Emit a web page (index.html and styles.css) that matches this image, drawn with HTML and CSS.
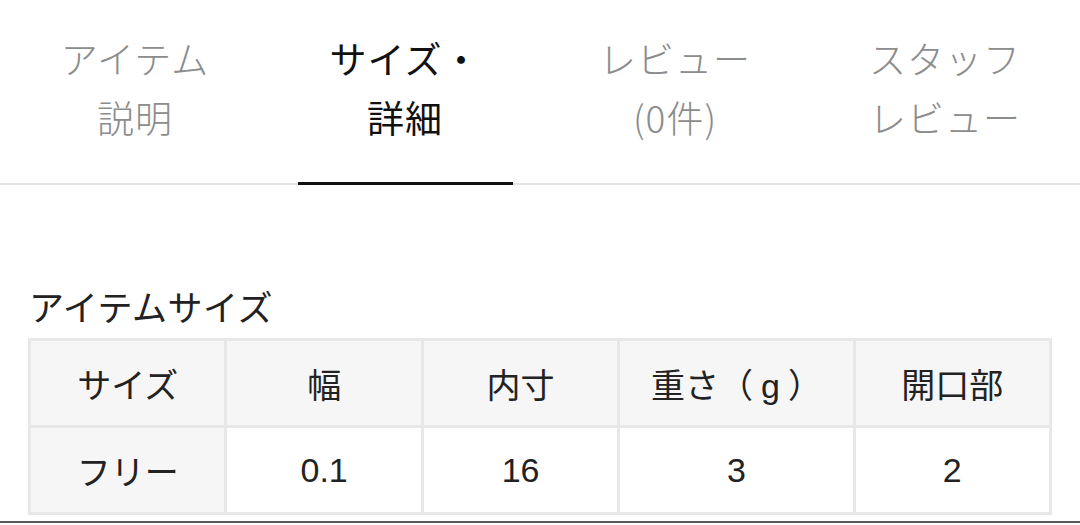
FILE: index.html
```html
<!DOCTYPE html>
<html lang="ja">
<head>
<meta charset="utf-8">
<link rel="stylesheet" href="styles.css">
</head>
<body>
<nav class="tabs">
  <div class="tab"><span>アイテム</span><span>説明</span></div>
  <div class="tab active"><span>サイズ・</span><span>詳細</span></div>
  <div class="tab"><span>レビュー</span><span>(0件)</span></div>
  <div class="tab"><span>スタッフ</span><span>レビュー</span></div>
</nav>
<section class="content">
  <h2 class="heading">アイテムサイズ</h2>
  <table class="size-table">
    <colgroup>
      <col class="c-std"><col class="c-std"><col class="c-std"><col class="c-wide"><col class="c-std">
    </colgroup>
    <tr>
      <th>サイズ</th><th>幅</th><th>内寸</th><th>重さ（<span class="unit">g</span>）</th><th>開口部</th>
    </tr>
    <tr>
      <th>フリー</th><td>0.1</td><td>16</td><td>3</td><td>2</td>
    </tr>
  </table>
</section>
<div class="rule"></div>
</body>
</html>
```

FILE: styles.css
```css
html, body {
  margin: 0;
  padding: 0;
  background: #fff;
}
body {
  font-family: "Liberation Sans", "Noto Sans CJK JP", sans-serif;
  color: #222;
  width: 1080px;
  height: 525px;
  overflow: hidden;
}
.tabs {
  display: grid;
  grid-template-columns: repeat(4, 1fr);
  height: 183px;
  border-bottom: 2px solid #e4e4e4;
}
.tab {
  position: relative;
  display: flex;
  flex-direction: column;
  align-items: center;
  justify-content: center;
  font-size: 37px;
  line-height: 59px;
  letter-spacing: 1px;
  color: #8c8c8c;
  font-family: "Noto Sans CJK JP", sans-serif;
  font-weight: 300;
  padding-bottom: 8px;
  box-sizing: border-box;
}
.tab.active {
  color: #111;
  font-weight: 400;
}
.tab.active::after {
  content: "";
  position: absolute;
  left: 28px;
  right: 27px;
  bottom: -2px;
  height: 3px;
  background: #111;
}
.content {
  padding: 0 28px;
}
.heading {
  margin: 97px 0 8px 1px;
  font-size: 35px;
  line-height: 48px;
  letter-spacing: 0.5px;
  font-weight: 400;
  font-family: "Noto Sans CJK JP", sans-serif;
  color: #222;
}
.size-table {
  width: 100%;
  border-collapse: collapse;
  table-layout: fixed;
}
.c-std { width: 19.24%; }
.c-wide { width: 23.04%; }
.size-table th,
.size-table td {
  border: 3px solid #e8e8e8;
  height: 84px;
  padding: 0;
  text-align: center;
  vertical-align: middle;
  font-size: 34px;
  font-weight: 400;
  color: #222;
}
.size-table th {
  background: #f6f6f6;
  font-family: "Noto Sans CJK JP", sans-serif;
}
.size-table th .unit {
  font-family: "Liberation Sans", sans-serif;
  margin: 0 8px;
}
.size-table td {
  background: #fff;
}
.rule {
  margin-top: 6px;
  border-top: 2px solid #5a5a5a;
}
```
